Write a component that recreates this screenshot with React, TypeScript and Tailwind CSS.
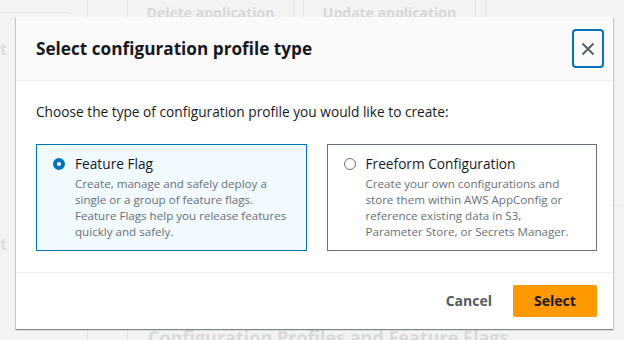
import React from "react";

function Radio({ checked }: { checked: boolean }) {
  return checked ? (
    <span className="mt-[4px] block h-[12px] w-[12px] shrink-0 rounded-full border-[4px] border-[#0073bb] bg-white" />
  ) : (
    <span className="mt-[4px] block h-[12px] w-[12px] shrink-0 rounded-full border border-[#687078] bg-white" />
  );
}

function Tile({
  checked,
  title,
  lines,
}: {
  checked: boolean;
  title: string;
  lines: string[];
}) {
  return (
    <div
      className={
        checked
          ? "flex gap-[10px] border border-[#0073bb] bg-[#f1faff] pb-[10px] pl-[16px] pr-[12px] pt-[9px]"
          : "flex gap-[10px] border border-[#687078] bg-white pb-[10px] pl-[16px] pr-[12px] pt-[9px]"
      }
    >
      <Radio checked={checked} />
      <div className="flex flex-col">
        <div className="text-[13.7px] leading-[20px] text-[#16191f]">{title}</div>
        <div className="mt-[2px] flex flex-col text-[11.6px] leading-[16px] text-[#687078]">
          {lines.map((l) => (
            <span key={l} className="whitespace-nowrap">
              {l}
            </span>
          ))}
        </div>
      </div>
    </div>
  );
}

export default function App() {
  return (
    <div className="relative h-[340px] w-[624px] overflow-hidden bg-[#f2f3f3] font-['Open_Sans',sans-serif]">
      {/* faded page behind the modal */}
      <div className="flex h-full">
        <div className="flex w-[88px] flex-col border-r border-[#e4e6e6]">
          <div className="h-[13px] w-[68px] border-b border-[#e4e6e6]" />
          <div className="mt-[26px] text-[16px] font-bold leading-[20px] text-[#dcdfdf]">t</div>
          <div className="mt-[175px] text-[16px] font-bold leading-[20px] text-[#dcdfdf]">t</div>
        </div>
        <div className="w-[40px] border-r border-[#e4e6e6]" />
        <div className="flex flex-1 flex-col">
          <div className="ml-[-1px] mt-[-6px] flex gap-[9px]">
            <div className="flex h-[31px] w-[167px] items-end justify-center border border-[#e4e6e6] pb-[1px] text-[14px] font-bold leading-[20px] text-[#d5d9d9]">
              Delete application
            </div>
            <div className="flex h-[31px] w-[173px] items-end justify-center border border-[#e4e6e6] pb-[1px] text-[14px] font-bold leading-[20px] text-[#d5d9d9]">
              Update application
            </div>
            <div className="h-[31px] flex-1 border-l border-[#e4e6e6]" />
          </div>
          <div className="mt-[180px] border-t border-[#e8eaea]" />
          <div className="mb-[-8px] mt-auto whitespace-nowrap pl-[20px] text-[18px] font-bold leading-[22px] text-[#d8dbdb]">
            Configuration Profiles and Feature Flags
          </div>
        </div>
      </div>

      {/* modal */}
      <div className="absolute left-[16px] top-[17px] flex w-[597px] flex-col bg-white shadow-[0_1px_1px_0_rgba(0,28,36,0.3),1px_1px_1px_0_rgba(0,28,36,0.15),-1px_1px_1px_0_rgba(0,28,36,0.15)]">
        <div className="flex h-[64px] items-center justify-between border-b border-[#eaeded] bg-[#fafafa] pl-[20px] pr-[9px]">
          <h2 className="text-[17.2px] font-bold leading-[22px] text-[#16191f]">
            Select configuration profile type
          </h2>
          <button className="flex h-[39px] w-[32px] items-center justify-center rounded-[4px] border-2 border-[#0073bb] bg-[#fafafa]">
            <svg width="14" height="14" viewBox="0 0 14 14" fill="none">
              <path d="M1.5 1.5 L12.5 12.5 M12.5 1.5 L1.5 12.5" stroke="#545b64" strokeWidth="1.8" />
            </svg>
          </button>
        </div>
        <div className="flex flex-col pb-[21px] pl-[20px] pr-[16px] pt-[21px]">
          <p className="text-[13.7px] leading-[20px] text-[#16191f]">
            Choose the type of configuration profile you would like to create:
          </p>
          <div className="mt-[22px] grid grid-cols-2 gap-[20px]">
            <Tile
              checked
              title="Feature Flag"
              lines={[
                "Create, manage and safely deploy a",
                "single or a group of feature flags.",
                "Feature Flags help you release features",
                "quickly and safely.",
              ]}
            />
            <Tile
              checked={false}
              title="Freeform Configuration"
              lines={[
                "Create your own configurations and",
                "store them within AWS AppConfig or",
                "reference existing data in S3,",
                "Parameter Store, or Secrets Manager.",
              ]}
            />
          </div>
        </div>
        <div className="flex h-[57px] items-center justify-end gap-[21px] border-t border-[#eaeded] pr-[16px]">
          <span className="text-[14px] font-bold leading-[20px] text-[#545b64]">Cancel</span>
          <button className="flex h-[32px] w-[84px] items-center justify-center rounded-[2px] bg-[#ff9900] text-[14px] font-bold leading-[20px] text-[#16191f]">
            Select
          </button>
        </div>
      </div>
    </div>
  );
}
